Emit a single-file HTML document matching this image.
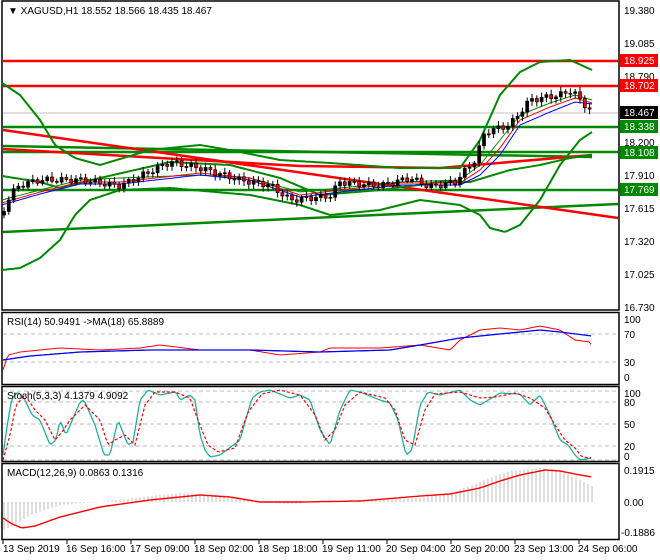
<!DOCTYPE html>
<html><head><meta charset="utf-8"><style>
body{margin:0;background:#fff;width:660px;height:560px;overflow:hidden}
svg{display:block;font-family:"Liberation Sans",sans-serif;font-size:10px}
</style></head><body>
<svg id="s" width="660" height="560" xmlns="http://www.w3.org/2000/svg">
<rect width="660" height="560" fill="#fff"/>
<!-- panel frames -->
<g fill="none" stroke="#000" stroke-width="1.5">
<rect x="2" y="1" width="617" height="309"/>
<rect x="2" y="312.5" width="617" height="72"/>
<rect x="2" y="386.5" width="617" height="75"/>
<rect x="2" y="463.5" width="617" height="76"/>
</g>
<!-- grid dashes -->
<g stroke="#bbb" stroke-dasharray="4,3" stroke-width="1">
<line x1="3" y1="334" x2="618" y2="334"/><line x1="3" y1="362" x2="618" y2="362"/>
<line x1="3" y1="402" x2="618" y2="402"/><line x1="3" y1="424" x2="618" y2="424"/><line x1="3" y1="446" x2="618" y2="446"/>
<line x1="3" y1="391" x2="618" y2="391"/><line x1="3" y1="460" x2="618" y2="460"/>
</g>
<line x1="3" y1="113" x2="618" y2="113" stroke="#c0c0c0"/>
<!-- levels -->
<g stroke-width="2.5">
<line x1="3" y1="61" x2="618" y2="61" stroke="#f00"/>
<line x1="3" y1="86" x2="618" y2="86" stroke="#f00"/>
<line x1="3" y1="127" x2="618" y2="127" stroke="#080"/>
<line x1="3" y1="152" x2="618" y2="152" stroke="#080"/>
<line x1="3" y1="190" x2="618" y2="190" stroke="#080"/>
<line x1="3" y1="232" x2="618" y2="204" stroke="#080"/>
<line x1="3" y1="146" x2="592" y2="157" stroke="#080"/>
<line x1="3" y1="130" x2="618" y2="218" stroke="#f00"/>
<polyline points="3,149 300,166 440,168 592,155" fill="none" stroke="#f00"/>
</g>
<g id="dyn"></g>
<!-- axis labels -->
<g fill="#000">
<text x="624" y="14">19.380</text><text x="624" y="47">19.085</text><text x="624" y="80">18.790</text>
<text x="624" y="146">18.200</text><text x="624" y="179">17.910</text><text x="624" y="212">17.615</text>
<text x="624" y="245">17.320</text><text x="624" y="278">17.025</text><text x="624" y="311">16.730</text>
<text x="624" y="323">100</text><text x="624" y="338">70</text><text x="624" y="366">30</text><text x="624" y="381">0</text>
<text x="624" y="397">100</text><text x="624" y="406">80</text><text x="624" y="428">50</text><text x="624" y="450">20</text><text x="624" y="460">0</text>
<text x="624" y="474">0.1915</text><text x="624" y="506">0.00</text><text x="621" y="536">-0.1886</text>
</g>
<rect x="620" y="54" width="38" height="13" fill="#f00"/><text x="624" y="64" fill="#fff">18.925</text>
<rect x="620" y="79" width="38" height="13" fill="#f00"/><text x="624" y="89" fill="#fff">18.702</text>
<rect x="620" y="106" width="38" height="13" fill="#000"/><text x="624" y="116" fill="#fff">18.467</text>
<rect x="620" y="120" width="38" height="13" fill="#080"/><text x="624" y="130" fill="#fff">18.338</text>
<rect x="620" y="146" width="38" height="13" fill="#080"/><text x="624" y="156" fill="#fff">18.108</text>
<rect x="620" y="183" width="38" height="13" fill="#080"/><text x="624" y="193" fill="#fff">17.769</text>
<text x="8" y="14" font-size="10">▼ XAGUSD,H1  18.552 18.566 18.435 18.467</text>
<text x="7" y="325">RSI(14) 50.9491  -&gt;MA(18) 65.8889</text>
<text x="7" y="399">Stoch(5,3,3) 4.1379 4.9092</text>
<text x="7" y="476">MACD(12,26,9) 0.0863 0.1316</text>
<g fill="#000">
<text x="3" y="552">13 Sep 2019</text><text x="66" y="552">16 Sep 16:00</text><text x="130" y="552">17 Sep 09:00</text>
<text x="194" y="552">18 Sep 02:00</text><text x="258" y="552">18 Sep 18:00</text><text x="322" y="552">19 Sep 11:00</text>
<text x="386" y="552">20 Sep 04:00</text><text x="450" y="552">20 Sep 20:00</text><text x="514" y="552">23 Sep 13:00</text>
<text x="578" y="552">24 Sep 06:00</text>
</g>
<g stroke="#000"><line x1="3" y1="540" x2="3" y2="544"/><line x1="67" y1="540" x2="67" y2="544"/><line x1="131" y1="540" x2="131" y2="544"/><line x1="195" y1="540" x2="195" y2="544"/><line x1="259" y1="540" x2="259" y2="544"/><line x1="323" y1="540" x2="323" y2="544"/><line x1="387" y1="540" x2="387" y2="544"/><line x1="451" y1="540" x2="451" y2="544"/><line x1="515" y1="540" x2="515" y2="544"/><line x1="579" y1="540" x2="579" y2="544"/></g>
</svg>
<script>
var NS="http://www.w3.org/2000/svg",g=document.getElementById("dyn");
function interp(p,x){for(var i=0;i<p.length-1;i++){if(x<=p[i+1][0]){var t=(x-p[i][0])/(p[i+1][0]-p[i][0]);return p[i][1]+t*(p[i+1][1]-p[i][1]);}}return p[p.length-1][1];}
function pl(p,c,w,d){var e=document.createElementNS(NS,"polyline");e.setAttribute("points",p.map(function(a){return a.join(",")}).join(" "));e.setAttribute("fill","none");e.setAttribute("stroke",c);e.setAttribute("stroke-width",w);if(d)e.setAttribute("stroke-dasharray",d);g.appendChild(e);}
function smooth(p,c,w,d){var o=[];for(var x=p[0][0];x<=p[p.length-1][0];x+=2)o.push([x,interp(p,x).toFixed(1)]);pl(o,c,w,d);}
// bands
smooth([[2,83],[20,95],[40,120],[55,145],[75,158],[100,165],[150,150],[200,145],[230,150],[280,160],[330,163],[400,168],[460,168],[480,140],[500,95],[520,72],[540,62],[570,60],[592,70]],"#080",2);
smooth([[2,270],[20,268],[40,258],[60,240],[75,215],[90,200],[120,190],[170,188],[250,195],[300,205],[330,215],[380,210],[420,200],[460,205],[480,215],[490,228],[505,232],[520,225],[540,200],[560,165],[580,140],[592,132]],"#080",2);
smooth([[2,176],[40,182],[60,188],[100,178],[170,162],[230,165],[280,178],[320,195],[380,190],[440,182],[470,182],[490,176],[510,170],[540,165],[570,158],[592,155]],"#080",2);
smooth([[2,200],[40,190],[80,180],[120,178],[200,175],[250,178],[300,192],[340,188],[400,182],[460,180],[480,165],[500,140],[520,115],[550,103],[575,95],[592,100]],"#080",1);
smooth([[2,203],[40,192],[80,182],[120,182],[200,173],[250,178],[300,195],[340,190],[400,183],[460,183],[480,170],[500,148],[520,120],[550,107],[575,98],[592,103]],"#f00",1);
smooth([[2,205],[40,194],[80,184],[120,184],[200,175],[250,180],[300,197],[340,192],[400,185],[460,185],[480,175],[500,155],[520,125],[550,112],[575,102],[592,104]],"#00f",1);
// candles
var price=[[2,215],[10,195],[20,185],[40,180],[80,180],[120,186],[170,162],[200,168],[240,180],[270,185],[290,200],[330,196],[340,182],[380,186],[410,178],[430,187],[455,182],[475,160],[485,132],[510,125],[530,100],[560,95],[572,90],[580,100],[592,112]];
var prev=interp(price,2);
for(var x=4;x<=592;x+=4.8){var c=interp(price,x)+Math.sin(x*1.7)*3,o=prev,hi=Math.min(o,c)-2-Math.abs(Math.sin(x))*3,lo=Math.max(o,c)+2+Math.abs(Math.cos(x*1.3))*3;
var l=document.createElementNS(NS,"line");l.setAttribute("x1",x);l.setAttribute("x2",x);l.setAttribute("y1",hi);l.setAttribute("y2",lo);l.setAttribute("stroke","#000");g.appendChild(l);
var r=document.createElementNS(NS,"rect");r.setAttribute("x",x-1.5);r.setAttribute("width",3);r.setAttribute("y",Math.min(o,c));r.setAttribute("height",Math.max(1,Math.abs(c-o)));r.setAttribute("fill",c<o?"#000":"#f00");r.setAttribute("stroke","#000");r.setAttribute("stroke-width",0.7);g.appendChild(r);prev=c;}
// RSI
smooth([[3,370],[8,355],[20,352],[40,350],[60,348],[100,350],[140,348],[160,345],[200,350],[250,350],[280,355],[320,352],[330,348],[380,348],[420,345],[450,350],[460,340],[480,330],[500,328],[520,330],[540,326],[560,330],[575,340],[590,342],[592,347]],"#f00",1);
smooth([[3,360],[30,356],[80,352],[150,350],[250,350],[320,352],[390,350],[420,345],[460,338],[500,334],[540,330],[560,332],[592,336]],"#00f",1.3);
// Stoch
smooth([[3,455],[8,420],[12,398],[18,392],[25,400],[32,415],[40,420],[50,445],[56,440],[60,420],[66,435],[80,402],[84,400],[95,425],[104,455],[110,455],[118,420],[128,445],[133,442],[140,400],[148,390],[160,395],[170,393],[176,392],[180,400],[190,395],[195,400],[200,435],[205,450],[210,457],[220,455],[240,440],[252,398],[260,392],[270,390],[290,398],[300,395],[310,400],[320,430],[330,445],[340,410],[350,390],[360,392],[380,400],[390,403],[398,420],[406,455],[412,450],[420,405],[428,392],[440,395],[460,390],[470,400],[480,405],[500,393],[520,394],[530,405],[540,395],[550,415],[560,440],[568,445],[575,455],[580,460],[592,458]],"#20b0a0",1.3);
smooth([[3,460],[10,435],[16,405],[25,395],[35,410],[45,420],[55,440],[62,432],[70,420],[85,405],[100,420],[108,445],[115,440],[125,435],[135,445],[145,405],[155,392],[175,392],[190,398],[198,420],[208,445],[218,452],[235,448],[248,412],[262,394],[280,390],[300,395],[315,415],[325,440],[335,430],[345,405],[360,392],[385,398],[395,410],[405,440],[415,445],[425,410],[435,394],[460,392],[480,398],[495,397],[515,393],[530,398],[545,408],[555,425],[565,440],[575,448],[582,457],[592,458]],"#f00",1.2,"3,2");
// MACD histogram
var hist=[[3,530],[15,525],[30,515],[60,505],[100,502],[150,496],[180,493],[220,495],[260,502],[290,504],[320,502],[360,500],[420,498],[450,493],[470,486],[490,478],[510,471],[540,468],[560,470],[575,478],[592,486]];
for(var x=4;x<=592;x+=4){var y=interp(hist,x);var l=document.createElementNS(NS,"line");l.setAttribute("x1",x);l.setAttribute("x2",x);l.setAttribute("y1",502);l.setAttribute("y2",y);l.setAttribute("stroke","#bbb");g.appendChild(l);}
smooth([[3,518],[12,524],[22,528],[35,526],[60,517],[100,507],[150,500],[200,495],[230,497],[260,502],[300,502],[360,501],[420,496],[450,494],[480,488],[500,481],[520,475],[545,470],[560,471],[575,474],[592,477]],"#f00",1.4);
</script>
</body></html>
